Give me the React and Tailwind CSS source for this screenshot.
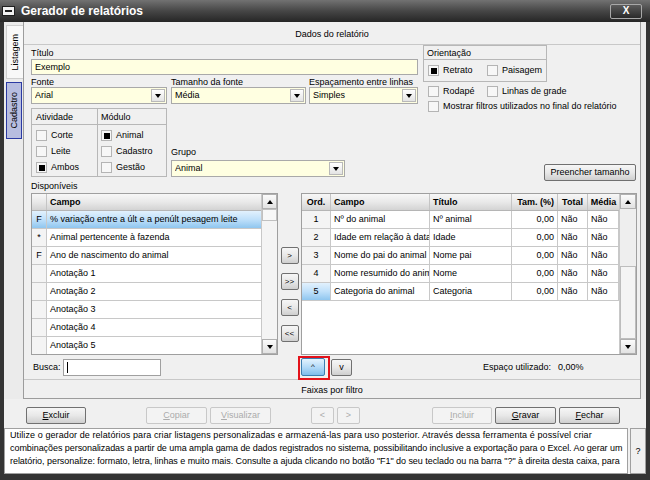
import React from 'react'

const FONT = "font-['Liberation_Sans',Arial,sans-serif]"

function Check({ on }) {
    return (
        <span className="w-[11px] h-[11px] border border-[#b4b4b4] bg-[#f7f7f7] flex items-center justify-center shrink-0">
            {on && <span className="w-[6px] h-[6px] bg-black" />}
        </span>
    )
}

function CheckRow({ on, label, className = '' }) {
    return (
        <div className={'flex items-center gap-[4px] ' + className}>
            <Check on={on} />
            <span>{label}</span>
        </div>
    )
}

function Arrow({ up }) {
    return up ? (
        <span className="w-0 h-0 border-l-[3px] border-r-[3px] border-b-[4px] border-l-transparent border-r-transparent border-b-black" />
    ) : (
        <span className="w-0 h-0 border-l-[3px] border-r-[3px] border-t-[4px] border-l-transparent border-r-transparent border-t-black" />
    )
}

function Select({ value, className = '' }) {
    return (
        <div className={'h-[17px] border border-[#a9a9a9] bg-[#ffffe1] flex items-center pl-[3px] pr-[1px] ' + className}>
            <span className="flex-1 whitespace-nowrap overflow-hidden">{value}</span>
            <span className="w-[14px] h-[13px] border border-[#b9b9b9] bg-gradient-to-b from-[#ffffff] to-[#e4e4e4] flex items-center justify-center">
                <Arrow />
            </span>
        </div>
    )
}

function Btn({ children, className = '', disabled }) {
    return (
        <div
            className={
                (disabled
                    ? 'border-[#c8c8c8] text-[#ababab] bg-[#f3f3f3] '
                    : 'border-[#707070] text-black bg-gradient-to-b from-[#f6f6f6] via-[#e8e8e8] to-[#cfcfcf] ') +
                'h-[17px] border rounded-[2px] flex items-center justify-center shrink-0 ' +
                className
            }
        >
            {children}
        </div>
    )
}

function ScrollBtn({ up }) {
    return (
        <div className="h-[15px] border border-[#b0b0b0] bg-gradient-to-b from-[#fbfbfb] to-[#e2e2e2] flex items-center justify-center shrink-0">
            <Arrow up={up} />
        </div>
    )
}

const avail = [
    ['F', '% variação entre a últ e a penúlt pesagem leite'],
    ['*', 'Animal pertencente à fazenda'],
    ['F', 'Ano de nascimento do animal'],
    ['', 'Anotação 1'],
    ['', 'Anotação 2'],
    ['', 'Anotação 3'],
    ['', 'Anotação 4'],
    ['', 'Anotação 5'],
]

const chosen = [
    ['1', 'Nº do animal', 'Nº animal'],
    ['2', 'Idade em relação à data', 'Idade'],
    ['3', 'Nome do pai do animal', 'Nome pai'],
    ['4', 'Nome resumido do animal', 'Nome'],
    ['5', 'Categoria do animal', 'Categoria'],
]

const hdr = 'bg-gradient-to-b from-[#f7f7f7] via-[#e9e9e9] to-[#d3d3d3] font-bold'
const selBlue = 'bg-gradient-to-b from-[#e2f1fd] via-[#bfe0fa] to-[#8fc6ef]'

export default function App() {
    return (
        <div className={FONT + ' w-[650px] h-[480px] bg-[#343434] flex flex-col overflow-hidden text-[9px] text-black leading-none'}>
            {/* Title bar */}
            <div className="h-[22px] shrink-0 bg-gradient-to-b from-[#727272] via-[#464646] to-[#262626] flex items-center pl-[2px]">
                <div className="w-[13px] h-[10px] bg-[#f2f2f2] border border-[#202020] flex items-center justify-center">
                    <span className="w-[7px] h-[2px] bg-[#222]" />
                </div>
                <span className="ml-[6px] text-white font-bold text-[12px]">Gerador de relatórios</span>
                <div className="ml-auto mr-[8px] w-[32px] h-[15px] border border-[#a8a8a8] rounded-[2px] bg-gradient-to-b from-[#5c5c5c] to-[#2a2a2a] flex items-center justify-center text-white font-bold text-[10px]">
                    X
                </div>
            </div>

            {/* Body */}
            <div className="h-[377px] shrink-0 mx-[4px] bg-[#ebebeb] flex">
                {/* Vertical tabs */}
                <div className="w-[19px] shrink-0 flex flex-col items-end pt-[3px]">
                    <div className="w-[17px] h-[54px] bg-[#f8f8f8] border-y border-l border-[#cfcfcf] flex items-center justify-center">
                        <span className="[writing-mode:vertical-rl] rotate-180 whitespace-nowrap">Listagem</span>
                    </div>
                    <div className="w-[16px] h-[57px] mt-[3px] mr-[1px] bg-[#b7bde0] border border-[#2b3aa3] flex items-center justify-center">
                        <span className="[writing-mode:vertical-rl] rotate-180 whitespace-nowrap">Cadastro</span>
                    </div>
                </div>

                {/* Main panel */}
                <div className="w-[618px] shrink-0 border-x border-b border-[#9c9c9c] bg-[#f0f0f0] flex flex-col">
                    <div className="h-[23px] shrink-0 border-b border-[#c8c8c8] flex items-center justify-center pt-[2px]">
                        Dados do relatório
                    </div>

                    <div className="pl-[7px] flex flex-col shrink-0">
                        {/* Top section */}
                        <div className="h-[136px] shrink-0 flex">
                            <div className="w-[387px] flex flex-col">
                                <div className="h-[14px] flex items-center pt-[2px]">Título</div>
                                <div className="h-[16px] border border-[#a9a9a9] bg-[#ffffe1] flex items-center pl-[3px]">Exemplo</div>
                                <div className="h-[12px] flex items-center pt-[2px]">
                                    <span className="w-[140px]">Fonte</span>
                                    <span className="w-[138px]">Tamanho da fonte</span>
                                    <span>Espaçamento entre linhas</span>
                                </div>
                                <div className="flex">
                                    <Select value="Arial" className="w-[136px]" />
                                    <Select value="Média" className="w-[135px] ml-[4px]" />
                                    <Select value="Simples" className="w-[109px] ml-[3px]" />
                                </div>
                                <div className="flex mt-[4px]">
                                    <div className="w-[136px] h-[69px] border border-[#b7b7b7] flex">
                                        <div className="w-[66px] border-r border-[#b7b7b7] flex flex-col">
                                            <div className="h-[16px] border-b border-[#b7b7b7] flex items-center pl-[4px] pt-[1px]">Atividade</div>
                                            <div className="flex flex-col pl-[4px] pt-[5px] gap-[5px]">
                                                <CheckRow label="Corte" />
                                                <CheckRow label="Leite" />
                                                <CheckRow on label="Ambos" />
                                            </div>
                                        </div>
                                        <div className="flex-1 flex flex-col">
                                            <div className="h-[16px] border-b border-[#b7b7b7] flex items-center pl-[3px] pt-[1px]">Módulo</div>
                                            <div className="flex flex-col pl-[3px] pt-[5px] gap-[5px]">
                                                <CheckRow on label="Animal" />
                                                <CheckRow label="Cadastro" />
                                                <CheckRow label="Gestão" />
                                            </div>
                                        </div>
                                    </div>
                                    <div className="ml-[4px] flex flex-col justify-end">
                                        <div className="h-[12px]">Grupo</div>
                                        <Select value="Animal" className="w-[174px]" />
                                    </div>
                                </div>
                            </div>

                            <div className="ml-[5px] w-[213px] flex flex-col">
                                <div className="w-[124px] h-[37px] border border-[#b7b7b7] flex flex-col">
                                    <div className="h-[14px] border-b border-[#b7b7b7] flex items-center pl-[3px] pt-[1px]">Orientação</div>
                                    <div className="flex-1 flex items-center pl-[4px]">
                                        <CheckRow on label="Retrato" className="w-[59px]" />
                                        <CheckRow label="Paisagem" />
                                    </div>
                                </div>
                                <div className="h-[15px] mt-[2px] flex items-center pl-[5px]">
                                    <CheckRow label="Rodapé" className="w-[59px]" />
                                    <CheckRow label="Linhas de grade" />
                                </div>
                                <div className="h-[15px] flex items-center pl-[5px]">
                                    <CheckRow label="Mostrar filtros utilizados no final do relatório" />
                                </div>
                                <Btn className="mt-auto self-end w-[92px]">Preencher tamanho</Btn>
                            </div>
                        </div>

                        <div className="h-[12px] shrink-0 leading-[10px]">Disponíveis</div>

                        {/* Lists */}
                        <div className="h-[162px] shrink-0 flex">
                            {/* Available fields */}
                            <div className="w-[247px] h-[162px] border border-[#9f9f9f] bg-white flex overflow-hidden">
                                <div className="w-[229px] flex flex-col">
                                    <div className={'h-[17px] shrink-0 flex border-b border-[#b5b5b5] ' + hdr}>
                                        <div className="w-[15px] border-r border-[#c4c4c4]" />
                                        <div className="flex-1 flex items-center pl-[3px]">Campo</div>
                                    </div>
                                    {avail.map(([f, c], i) => (
                                        <div key={i} className={'h-[18px] shrink-0 flex border-b border-[#c8c8c8] ' + (i === 0 ? selBlue : '')}>
                                            <div className={'w-[15px] border-r border-[#c8c8c8] flex items-center justify-center ' + (i === 0 ? '' : 'bg-[#f4f4f4]')}>{f}</div>
                                            <div className="flex-1 flex items-center pl-[3px] whitespace-nowrap overflow-hidden">{c}</div>
                                        </div>
                                    ))}
                                </div>
                                <div className="w-[16px] border-l border-[#c8c8c8] bg-[#f4f4f4] flex flex-col">
                                    <ScrollBtn up />
                                    <div className="h-[12px] border border-[#c0c0c0] bg-[#f7f7f7]" />
                                    <div className="flex-1" />
                                    <ScrollBtn />
                                </div>
                            </div>

                            {/* Move buttons */}
                            <div className="w-[23px] flex flex-col items-center pt-[54px] gap-[9px] text-[8px]">
                                <Btn className="w-[18px] h-[15px]">&gt;</Btn>
                                <Btn className="w-[18px] h-[15px]">&gt;&gt;</Btn>
                                <Btn className="w-[18px] h-[15px]">&lt;</Btn>
                                <Btn className="w-[18px] h-[15px]">&lt;&lt;</Btn>
                            </div>

                            {/* Chosen fields */}
                            <div className="w-[336px] h-[162px] border border-[#9f9f9f] bg-white flex overflow-hidden">
                                <div className="w-[317px] flex flex-col">
                                    <div className={'h-[17px] shrink-0 flex border-b border-[#b5b5b5] ' + hdr}>
                                        <div className="w-[29px] border-r border-[#c4c4c4] flex items-center justify-center">Ord.</div>
                                        <div className="w-[99px] border-r border-[#c4c4c4] flex items-center pl-[3px]">Campo</div>
                                        <div className="w-[82px] border-r border-[#c4c4c4] flex items-center pl-[3px]">Título</div>
                                        <div className="w-[46px] border-r border-[#c4c4c4] flex items-center justify-end pr-[3px]">Tam. (%)</div>
                                        <div className="w-[30px] border-r border-[#c4c4c4] flex items-center justify-center">Total</div>
                                        <div className="w-[31px] flex items-center justify-center">Média</div>
                                    </div>
                                    {chosen.map(([o, c, t], i) => (
                                        <div key={i} className="h-[18px] shrink-0 flex border-b border-[#c8c8c8]">
                                            <div className={'w-[29px] border-r border-[#c8c8c8] flex items-center justify-center ' + (i === 4 ? selBlue : 'bg-[#f4f4f4]')}>{o}</div>
                                            <div className="w-[99px] border-r border-[#c8c8c8] pl-[3px] whitespace-nowrap overflow-hidden leading-[17px]">{c}</div>
                                            <div className="w-[82px] border-r border-[#c8c8c8] flex items-center pl-[3px]">{t}</div>
                                            <div className="w-[46px] border-r border-[#c8c8c8] flex items-center justify-end pr-[3px]">0,00</div>
                                            <div className="w-[30px] border-r border-[#c8c8c8] flex items-center pl-[3px]">Não</div>
                                            <div className="w-[31px] border-r border-[#c8c8c8] flex items-center pl-[3px]">Não</div>
                                        </div>
                                    ))}
                                </div>
                                <div className="w-[17px] border-l border-[#c8c8c8] bg-[#ececec] flex flex-col">
                                    <ScrollBtn up />
                                    <div className="h-[57px] bg-[#eeeeee]" />
                                    <div className="flex-1 border border-[#bdbdbd] bg-[#f4f4f4]" />
                                    <ScrollBtn />
                                </div>
                            </div>
                        </div>

                        {/* Search / order row */}
                        <div className="h-[24px] shrink-0 flex items-center">
                            <div className="w-[270px] flex items-center">
                                <span className="w-[32px] pl-[2px]">Busca:</span>
                                <div className="w-[98px] h-[17px] border border-[#a0a0a0] bg-white flex items-center pl-[3px]">
                                    <span className="w-px h-[11px] bg-black" />
                                </div>
                            </div>
                            <div className="relative">
                                <div className="w-[24px] h-[18px] border border-[#3c7fb1] rounded-[2px] bg-gradient-to-b from-[#e4f3fd] via-[#b4dbf8] to-[#7fbdec] flex items-center justify-center text-[8px]">
                                    ^
                                </div>
                                <div className="absolute -left-[3px] -top-[2px] w-[32px] h-[24px] border-2 border-[#e3121a]" />
                            </div>
                            <Btn className="ml-[6px] w-[21px] h-[16px]">v</Btn>
                            <span className="ml-[131px] w-[75px]">Espaço utilizado:</span>
                            <span>0,00%</span>
                        </div>
                    </div>

                    <div className="h-[19px] shrink-0 border-t border-[#c8c8c8] flex items-center justify-center pt-[2px]">Faixas por filtro</div>
                </div>
                <div className="flex-1" />
            </div>

            {/* Toolbar */}
            <div className="h-[28px] shrink-0 mx-[4px] bg-[#f0f0f0] flex items-start pt-[8px]">
                <Btn className="ml-[22px] w-[60px]"><span><u>E</u>xcluir</span></Btn>
                <Btn disabled className="ml-[60px] w-[61px]"><span><u>C</u>opiar</span></Btn>
                <Btn disabled className="ml-[3px] w-[61px]"><span><u>V</u>isualizar</span></Btn>
                <Btn disabled className="ml-[40px] w-[23px]">&lt;</Btn>
                <Btn disabled className="ml-[3px] w-[23px]">&gt;</Btn>
                <Btn disabled className="ml-[72px] w-[60px]"><span><u>I</u>ncluir</span></Btn>
                <Btn className="ml-[3px] w-[61px]"><span><u>G</u>ravar</span></Btn>
                <Btn className="ml-[3px] w-[61px]"><span><u>F</u>echar</span></Btn>
            </div>

            {/* Help */}
            <div className="h-[47px] shrink-0 mx-[4px] bg-[#f0f0f0] flex gap-[2px] pt-px">
                <div className="w-[624px] h-[46px] border border-[#a0a0a0] bg-white px-[5px] leading-[13px] overflow-hidden">
                    <div className="whitespace-nowrap tracking-[0.09px]">Utilize o gerador de relatórios para criar listagens personalizadas e armazená-las para uso posterior. Através dessa ferramenta é possível criar</div>
                    <div className="whitespace-nowrap tracking-[-0.06px]">combinações personalizadas a partir de uma ampla gama de dados registrados no sistema, possibilitando inclusive a exportação para o Excel. Ao gerar um</div>
                    <div className="whitespace-nowrap tracking-[-0.05px]">relatório, personalize: formato, letra, linhas e muito mais. Consulte a ajuda clicando no botão "F1" do seu teclado ou na barra "?" à direita desta caixa, para</div>
                </div>
                <div className="flex-1 h-[46px] border border-[#a0a0a0] bg-[#f0f0f0] flex items-center justify-center">?</div>
            </div>
        </div>
    )
}
